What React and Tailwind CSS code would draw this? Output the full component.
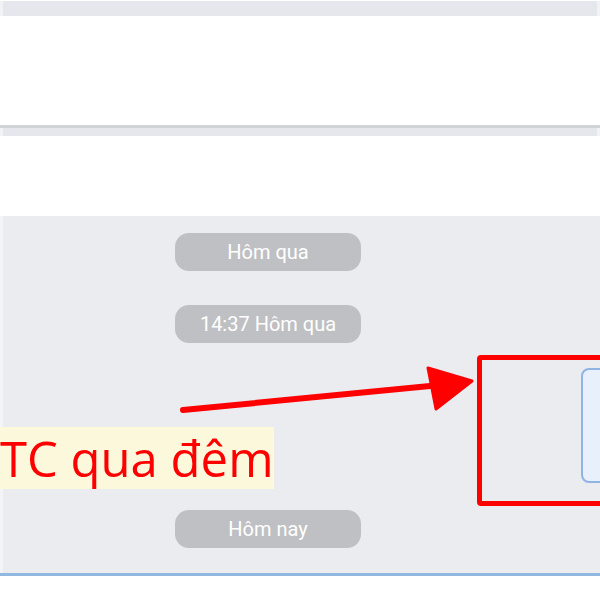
export default function App() {
  const pill = 'ml-[172px] flex h-[38px] w-[186px] items-center justify-center rounded-[14px] bg-[#bfc0c3] text-[20px] text-white';
  return (
    <div className="relative h-[600px] w-[600px] overflow-hidden bg-white" style={{ fontFamily: 'Roboto, "Liberation Sans", sans-serif' }}>
      {/* top band */}
      <div className="mt-[1px] h-[15px] border-l-[3px] border-r-[3px] border-[#f2f2f4] bg-[#e6e7ec]" />
      <div className="h-[109px] bg-white" />
      <div className="h-[3px] bg-[#d2d3d6]" />
      <div className="h-[8px] border-l-[3px] border-r-[3px] border-[#f2f2f4] bg-[#e6e7ec]" />
      <div className="h-[80px] bg-white" />

      {/* chat area */}
      <div className="h-[357px] border-l-[3px] border-[#f4f4f6] bg-[#ebecf0] pt-[17px]">
        <div className={pill}>Hôm qua</div>
        <div className={`${pill} mt-[34px]`}>14:37 Hôm qua</div>
        <div className="ml-[-3px] mt-[84px] flex h-[62px] w-[274px] items-center bg-[#fbf8dc]">
          <span className="whitespace-nowrap text-[49px] leading-none text-[#ff0000]" style={{ fontFamily: '"Open Sans", "Noto Sans", sans-serif' }}>
            TC qua đêm
          </span>
        </div>
        <div className={`${pill} mt-[21px]`}>Hôm nay</div>
      </div>
      <div className="h-[3px] bg-[#92b8e2]" />
      <div className="h-[25px] bg-white" />

      {/* annotation: red frame with blue box */}
      <div className="absolute left-[477px] top-[355px] h-[151px] w-[140px] rounded-[4px] border-[5px] border-[#ff0000]">
        <div className="absolute left-[99px] top-[8px] h-[115px] w-[60px] rounded-[8px] border-2 border-[#8fb4e3] bg-[#e8f0fb]" />
      </div>

      {/* annotation: arrow */}
      <svg className="absolute left-0 top-0" width="600" height="600">
        <line x1="183" y1="410" x2="430" y2="386" stroke="#ff0000" strokeWidth="6" strokeLinecap="round" />
        <polygon points="428,368 472,381 436,409" fill="#ff0000" stroke="#ff0000" strokeWidth="3" strokeLinejoin="round" />
      </svg>
    </div>
  );
}
